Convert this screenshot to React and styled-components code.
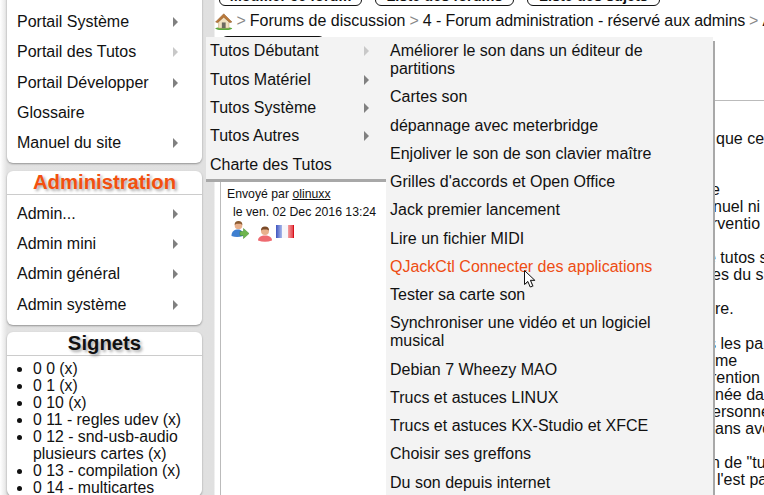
import React from 'react';
import styled, { createGlobalStyle } from 'styled-components';

const GlobalStyle = createGlobalStyle`
  html, body {
    margin: 0;
    height: 495px;
    overflow: hidden;
    background: #fff;
  }
  body {
    color: #111;
    font-family: "Liberation Sans", Arial, sans-serif;
  }
`;

const portalItems = [
  { label: 'Portail Système', arrow: true },
  { label: 'Portail des Tutos', arrow: true, faded: true },
  { label: 'Portail Développer', arrow: true },
  { label: 'Glossaire' },
  { label: 'Manuel du site', arrow: true },
];
const adminItems = ['Admin...', 'Admin mini', 'Admin général', 'Admin système'];
const bookmarks = [
  '0 0 (x)',
  '0 1 (x)',
  '0 10 (x)',
  '0 11 - regles udev (x)',
  '0 12 - snd-usb-audio plusieurs cartes (x)',
  '0 13 - compilation (x)',
  '0 14 - multicartes',
];
const tutoMenu = [
  { label: 'Tutos Débutant', arrow: true, faded: true },
  { label: 'Tutos Matériel', arrow: true },
  { label: 'Tutos Système', arrow: true },
  { label: 'Tutos Autres', arrow: true },
  { label: 'Charte des Tutos' },
];
const subMenu = [
  'Améliorer le son dans un éditeur de partitions',
  'Cartes son',
  'dépannage avec meterbridge',
  'Enjoliver le son de son clavier maître',
  "Grilles d'accords et Open Office",
  'Jack premier lancement',
  'Lire un fichier MIDI',
  'QJackCtl Connecter des applications',
  'Tester sa carte son',
  'Synchroniser une vidéo et un logiciel musical',
  'Debian 7 Wheezy MAO',
  'Trucs et astuces LINUX',
  'Trucs et astuces KX-Studio et XFCE',
  'Choisir ses greffons',
  'Du son depuis internet',
];
// the message runs on under the open menus, only the line ends show
const bodyLines = [
  { text: 'que ce', x: 16 },
  {},
  {},
  { text: 'e', x: 11 },
  { text: 'nuel ni', x: 13 },
  { text: 'rventio', x: 12 },
  {},
  { text: 'e tutos s', x: 7 },
  { text: 'es du si', x: 12 },
  {},
  { text: 're.', x: 15 },
  {},
  { text: 's les pa', x: 8 },
  { text: 'me', x: 15 },
  { text: 'rention', x: 11 },
  { text: 'née da', x: 15 },
  { text: 'ersonne', x: 12 },
  { text: 'ans avo', x: 15 },
  {},
  { text: 'n de "tu', x: 11 },
  { text: "l'est pa", x: 17 },
];

const Page = styled.div`
  display: flex;
  height: 495px;
  overflow: hidden;
  position: relative;
  width: 764px;
`;

const Sidebar = styled.aside`
  background: linear-gradient(to right, #fff, #e2e2e2 7px, #e0e0e0 214px, #fff 215px);
  box-sizing: border-box;
  display: flex;
  flex: none;
  flex-direction: column;
  gap: 7.5px;
  margin-top: -15px;
  padding: 0 13px 0 7px;
  width: 215px;
`;

const Panel = styled.section`
  background: #fff;
  border-radius: 6px;
  box-shadow: 0 1px 2px rgba(0, 0, 0, 0.35);
  flex: none;
`;

const PanelTitle = styled.h2`
  border-bottom: 1px solid #ccc;
  color: ${({ color }) => color};
  font-size: 20.3px;
  font-weight: bold;
  height: 23px;
  line-height: 23px;
  margin: 0;
  text-align: center;
  text-shadow: 2px 2px 3px rgba(0, 0, 0, 0.35);
`;

const MenuList = styled.ul`
  list-style: none;
  margin: 0;
  padding: ${({ $top }) => $top}px 0 5px;
`;

const MenuItem = styled.li`
  align-items: center;
  display: flex;
  font-size: 16px;
  height: 30.25px;
  justify-content: space-between;
  padding: 0 24px 0 10px;
`;

const Arrow = styled.span`
  border-bottom: 5px solid transparent;
  border-left: 5px solid ${({ $faded }) => ($faded ? '#c8c8c8' : '#808080')};
  border-top: 5px solid transparent;
  height: 0;
  width: 0;
`;

const Bookmarks = styled.ul`
  font-size: 15.8px;
  line-height: 17px;
  margin: 0;
  padding: 3.5px 10px 0 26px;
`;

const Main = styled.main`
  display: flex;
  flex: 1;
  flex-direction: column;
  min-width: 0;
`;

const ButtonRow = styled.div`
  display: flex;
  flex: none;
  gap: 13px;
  margin-top: -14px;
  padding-left: 4px;
`;

const TopButton = styled.div`
  border: 1px solid #111;
  border-radius: 6px;
  box-sizing: border-box;
  flex: none;
  font-size: 14.5px;
  font-weight: bold;
  height: 20px;
  line-height: 19px;
  text-align: center;
  white-space: nowrap;
  width: ${({ $width }) => $width}px;
`;

const Breadcrumb = styled.nav`
  align-items: center;
  display: flex;
  flex: none;
  font-size: 16px;
  gap: 4px;
  height: 30px;
  white-space: nowrap;
`;

const Crumb = styled.span`
  color: ${({ $sep }) => ($sep ? '#888' : '#111')};
  letter-spacing: ${({ $tight }) => ($tight ? '-0.11px' : 'normal')};
`;

const ToolRow = styled.div`
  flex: none;
  height: 64px;
  padding-left: 6px;
`;

const ToolButton = styled.div`
  border: 1px solid #111;
  border-radius: 6px;
  box-sizing: border-box;
  height: 20px;
  width: 104px;
`;

const PostBox = styled.div`
  border-left: 1px solid #bbb;
  border-top: 1px solid #bbb;
  box-sizing: border-box;
  display: flex;
  flex: 1;
  margin-left: 5px;
  min-height: 0;
`;

const AuthorColumn = styled.div`
  box-sizing: border-box;
  flex: none;
  font-size: 12.25px;
  line-height: 17.5px;
  padding: 85px 0 0 6px;
  width: 479px;
`;

const AuthorName = styled.span`
  text-decoration: underline;
`;

const PostDate = styled.div`
  padding-left: 6px;
`;

const Badges = styled.div`
  align-items: flex-start;
  display: flex;
  height: 19px;
  padding-left: 4px;
`;

const BadgeSlot = styled.span`
  display: block;
  flex: none;
  height: ${({ $h }) => $h}px;
  margin: ${({ $top }) => $top}px ${({ $right }) => $right}px 0 0;
`;

const PostBody = styled.div`
  flex: 1;
  font-size: 16px;
  line-height: 17.05px;
  min-width: 0;
  padding-top: 29px;
`;

const BodyLine = styled.div`
  height: 17.05px;
  padding-left: ${({ $x }) => $x || 0}px;
  white-space: nowrap;
`;

const TutoMenu = styled.ul`
  background: #f3f3f3;
  box-shadow: 0 3px 0 #a8a8a8;
  box-sizing: border-box;
  left: 206px;
  list-style: none;
  margin: 0;
  padding: 0;
  position: absolute;
  top: 37px;
  width: 180px;
`;

const TutoItem = styled.li`
  align-items: center;
  display: flex;
  font-size: 16px;
  height: 28.4px;
  justify-content: space-between;
  padding: 0 17px 0 4px;
`;

const SubMenu = styled.ul`
  background: #f3f3f3;
  box-shadow: 2px 4px 0 #a8a8a8;
  box-sizing: border-box;
  left: 386px;
  list-style: none;
  margin: 0;
  padding: 5px 0 0;
  position: absolute;
  top: 37px;
  width: 327px;
`;

const SubItem = styled.li`
  color: ${({ $active }) => ($active ? '#ee4c12' : '#111')};
  font-size: 16px;
  line-height: 18px;
  padding: 0 30px 10.28px 4px;
`;

const Cursor = styled.svg`
  left: 523px;
  position: absolute;
  top: 269px;
`;

const HomeIcon = () => (
  <svg width="17.5" height="17" viewBox="0 0 18 18" style={{ flex: 'none' }} aria-hidden="true">
    <ellipse cx="9" cy="16.5" rx="9" ry="1.6" fill="#5aa83c" />
    <path d="M3.5 8 V16 H14.5 V8 L9 3 Z" fill="#f1e2c2" stroke="#c8a878" strokeWidth="0.6" />
    <path d="M0.3 9.5 L9 0.8 L17.7 9.5 L15.5 10.2 L9 4.5 L2.5 10.2 Z" fill="#b9783a" stroke="#8a5526" strokeWidth="0.5" />
    <rect x="7" y="10" width="4" height="6" fill="#6e6a60" />
  </svg>
);

const UserMoveIcon = () => (
  <svg width="18" height="18" viewBox="0 0 18 18" style={{ display: 'block' }} aria-hidden="true">
    <circle cx="7.5" cy="4.5" r="3.8" fill="#e8b08c" />
    <path d="M3.6 4 A3.9 3.9 0 0 1 11.4 4 L9.5 2.8 L5.5 2.8 Z" fill="#8a5a30" />
    <path d="M0.5 15 C0.5 10 3.5 8.5 7 8.5 C10 8.5 12 10 12 15 Q6 17 0.5 15 Z" fill="#3f7fd0" />
    <path d="M9 10.5 L12.5 10.5 L12.5 7.5 L18 12.5 L12.5 17.5 L12.5 14.5 L9 14.5 Z" fill="#6db54e" stroke="#3f8a2c" strokeWidth="0.5" />
  </svg>
);

const UserIcon = () => (
  <svg width="16" height="16" viewBox="0 0 16 16" style={{ display: 'block' }} aria-hidden="true">
    <circle cx="8" cy="5" r="4" fill="#e8b08c" />
    <path d="M4 4.6 A4 4 0 0 1 12 4.6 L10 3.4 L6 3.4 Z" fill="#7a4a28" />
    <path d="M1 14.5 C1 11 4 9.5 8 9.5 C12 9.5 15 11 15 14.5 Q8 17 1 14.5 Z" fill="#ee6a70" />
  </svg>
);

const FlagIcon = () => (
  <svg width="18" height="13" viewBox="0 0 18 13" style={{ display: 'block' }} aria-hidden="true">
    <defs>
      <linearGradient id="flagBlue" x1="0" x2="1">
        <stop offset="0" stopColor="#3f55c0" />
        <stop offset="1" stopColor="#a8b8ea" />
      </linearGradient>
      <linearGradient id="flagRed" x1="0" x2="1">
        <stop offset="0" stopColor="#f4a0a0" />
        <stop offset="1" stopColor="#e0303a" />
      </linearGradient>
    </defs>
    <rect width="6" height="13" fill="url(#flagBlue)" />
    <rect x="6" width="6" height="13" fill="#f6f6fa" />
    <rect x="12" width="6" height="13" fill="url(#flagRed)" />
    <rect x="17" width="1" height="13" fill="#d8101a" />
  </svg>
);

const App = () => (
  <Page>
    <GlobalStyle />
    <Sidebar>
      <Panel>
        <MenuList $top={22}>
          {portalItems.map(({ label, arrow, faded }) => (
            <MenuItem key={label}>
              {label}
              {arrow && <Arrow $faded={faded} />}
            </MenuItem>
          ))}
        </MenuList>
      </Panel>
      <Panel>
        <PanelTitle color="#f2500f">Administration</PanelTitle>
        <MenuList $top={4}>
          {adminItems.map((label) => (
            <MenuItem key={label}>
              {label}
              <Arrow />
            </MenuItem>
          ))}
        </MenuList>
      </Panel>
      <Panel>
        <PanelTitle color="#111">Signets</PanelTitle>
        <Bookmarks>
          {bookmarks.map((label) => (
            <li key={label}>{label}</li>
          ))}
        </Bookmarks>
      </Panel>
    </Sidebar>
    <Main>
      <ButtonRow>
        <TopButton $width={143}>Modifier ce forum</TopButton>
        <TopButton $width={139}>Liste des forums</TopButton>
        <TopButton $width={133}>Liste des sujets</TopButton>
      </ButtonRow>
      <Breadcrumb>
        <HomeIcon />
        <Crumb $sep>&gt;</Crumb>
        <Crumb>Forums de discussion</Crumb>
        <Crumb $sep>&gt;</Crumb>
        <Crumb $tight>4 - Forum administration - réservé aux admins</Crumb>
        <Crumb $sep>&gt;</Crumb>
        <Crumb>Administration</Crumb>
      </Breadcrumb>
      <ToolRow>
        <ToolButton />
      </ToolRow>
      <PostBox>
        <AuthorColumn>
          <div>
            Envoyé par <AuthorName>olinuxx</AuthorName>
          </div>
          <PostDate>le ven. 02 Dec 2016 13:24</PostDate>
          <Badges>
            <BadgeSlot $h={18} $top={0} $right={8}><UserMoveIcon /></BadgeSlot>
            <BadgeSlot $h={16} $top={5} $right={3}><UserIcon /></BadgeSlot>
            <BadgeSlot $h={13} $top={4} $right={0}><FlagIcon /></BadgeSlot>
          </Badges>
        </AuthorColumn>
        <PostBody>
          {bodyLines.map(({ text, x }, i) => (
            <BodyLine key={i} $x={x}>{text}</BodyLine>
          ))}
        </PostBody>
      </PostBox>
    </Main>
    <TutoMenu>
      {tutoMenu.map(({ label, arrow, faded }) => (
        <TutoItem key={label}>
          {label}
          {arrow && <Arrow $faded={faded} />}
        </TutoItem>
      ))}
    </TutoMenu>
    <SubMenu>
      {subMenu.map((label) => (
        <SubItem key={label} $active={label.startsWith('QJackCtl')}>{label}</SubItem>
      ))}
    </SubMenu>
    <Cursor width="15" height="21" viewBox="0 0 15 21" aria-hidden="true">
      <path d="M2.5 2.5 V16 L5.8 13 L8.2 18.5 L10.8 17.4 L8.4 12 L12.8 12 Z" fill="rgba(0,0,0,0.3)" />
      <path d="M1.5 1.5 V15.5 L4.8 12.4 L7.2 18 L9.8 16.9 L7.4 11.3 L11.8 11.3 Z" fill="#fff" stroke="#111" strokeWidth="1" />
    </Cursor>
  </Page>
);

export default App;
